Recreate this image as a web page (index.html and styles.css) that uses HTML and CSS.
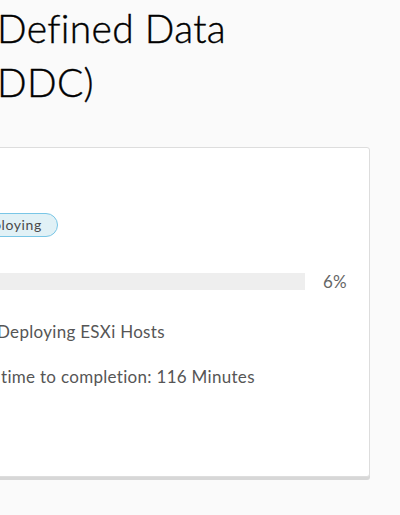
FILE: index.html
```html
<!DOCTYPE html>
<html>
<head>
<meta charset="utf-8">
<link rel="stylesheet" href="styles.css">
</head>
<body>
<main class="page">
  <h1 class="title">Defined Data<br>DDC)</h1>
  <section class="card">
    <div class="badge-row"><span class="badge">Deploying</span></div>
    <div class="progress-row">
      <div class="bar"><div class="fill" style="width:6%"></div></div>
      <span class="pct">6%</span>
    </div>
    <p class="task">Deploying ESXi Hosts</p>
    <p class="eta">time to completion: 116 Minutes</p>
  </section>
</main>
</body>
</html>
```
FILE: styles.css
```css
html, body {
  margin: 0;
  padding: 0;
}
body {
  background: #fafafa;
  width: 400px;
  height: 515px;
  overflow: hidden;
  font-family: Lato, "Noto Sans", sans-serif;
}
.page {
  display: flex;
  flex-direction: column;
}
.title {
  margin: 1px 0 0 -3px;
  font-size: 39px;
  line-height: 54px;
  font-weight: 300;
  color: #000;
  letter-spacing: 0.3px;
  -webkit-text-stroke: 0.4px #000;
}
.card {
  margin: 38px 0 0 -60px;
  width: 430px;
  height: 330px;
  box-sizing: border-box;
  background: #fff;
  border: 1px solid #ddd;
  border-radius: 3px;
  box-shadow: 0 3px 0 #d7d7d7;
  padding: 65px 22px 0 56px;
  display: flex;
  flex-direction: column;
}
.badge-row {
  display: flex;
}
.badge {
  margin-left: -36px;
  height: 24px;
  box-sizing: border-box;
  border: 1px solid #79c6e6;
  background: #e1f1f6;
  border-radius: 12px;
  padding: 0 15px 0 12px;
  font-size: 14px;
  line-height: 22px;
  color: #4a4a4a;
  letter-spacing: 0.6px;
}
.progress-row {
  margin-top: 36px;
  display: flex;
  align-items: center;
  gap: 18px;
}
.bar {
  flex: 1;
  height: 17px;
  background: #eeeeee;
}
.fill {
  height: 100%;
  background: #eeeeee;
}
.pct {
  font-size: 17px;
  color: #666;
  line-height: 17px;
  letter-spacing: 0.3px;
}
.task, .eta {
  margin: 0;
  font-size: 17px;
  line-height: 20px;
  color: #565656;
  letter-spacing: 0.3px;
}
.task {
  margin-top: 32px;
}
.eta {
  margin-top: 25px;
  margin-left: 4px;
}
```
